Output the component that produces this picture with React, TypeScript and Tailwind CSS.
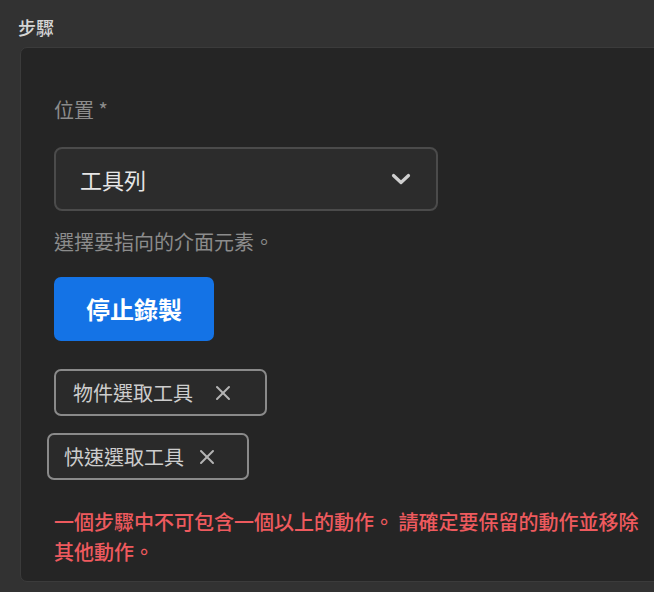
import React from "react";

const font = { fontFamily: '"Noto Sans CJK TC", "Noto Sans", sans-serif' };

function XIcon() {
  return (
    <svg width="16" height="16" viewBox="0 0 16 16" fill="none" stroke="#b4b4b4" strokeWidth="2" strokeLinecap="round">
      <line x1="2" y1="2" x2="14" y2="14" />
      <line x1="14" y1="2" x2="2" y2="14" />
    </svg>
  );
}

export default function App() {
  return (
    <div
      className="w-[654px] h-[592px] overflow-hidden bg-[#323232] flex flex-col [font-family:'Noto_Sans_CJK_TC','Noto_Sans',sans-serif]"
      style={font}
    >
      <div className="pl-[18px] pt-[14px] h-[47px] text-[18px] leading-[26px] text-[#d6d6d6] font-medium">步驟</div>
      <div className="ml-[20px] w-[660px] h-[535px] shrink-0 rounded-[7px] bg-[#252525] border border-[#3b3b3b] pl-[33px] pt-[48px] flex flex-col items-start">
        <div className="text-[20px] leading-[28px] text-[#8c8c8c]">位置 *</div>
        <div className="mt-[23px] w-[384px] h-[64px] rounded-[8px] border-2 border-[#4b4b4b] bg-[#2c2c2c] flex items-center justify-between pl-[24px] pr-[25px]">
          <span className="text-[22px] text-[#e6e6e6]">工具列</span>
          <svg width="20" height="14" viewBox="0 0 20 14" fill="none" stroke="#cfcfcf" strokeWidth="3.2" strokeLinecap="round" strokeLinejoin="round">
            <polyline points="2.5,3.5 10,10.5 17.5,3.5" />
          </svg>
        </div>
        <div className="mt-[17px] text-[20px] leading-[28px] text-[#8c8c8c]">選擇要指向的介面元素。</div>
        <button className="mt-[21px] w-[160px] h-[64px] rounded-[7px] bg-[#1473e6] text-white text-[24px] font-bold flex items-center justify-center">
          停止錄製
        </button>
        <div className="mt-[28px] h-[47px] rounded-[7px] border-2 border-[#8a8a8a] bg-[#2a2a2a] flex items-center pl-[17px] pr-[34px]">
          <span className="text-[20px] text-[#cdcdcd]">物件選取工具</span>
          <span className="ml-[22px] flex"><XIcon /></span>
        </div>
        <div className="mt-[17px] -ml-[7px] h-[47px] rounded-[7px] border-2 border-[#8a8a8a] bg-[#2a2a2a] flex items-center pl-[15px] pr-[32px]">
          <span className="text-[20px] text-[#cdcdcd]">快速選取工具</span>
          <span className="ml-[15px] flex"><XIcon /></span>
        </div>
        <p className="mt-[27px] w-[596px] text-[20px] leading-[30px] font-medium text-[#ee5a5e]">
          一個步驟中不可包含一個以上的動作。 請確定要保留的動作並移除其他動作。
        </p>
      </div>
    </div>
  );
}
